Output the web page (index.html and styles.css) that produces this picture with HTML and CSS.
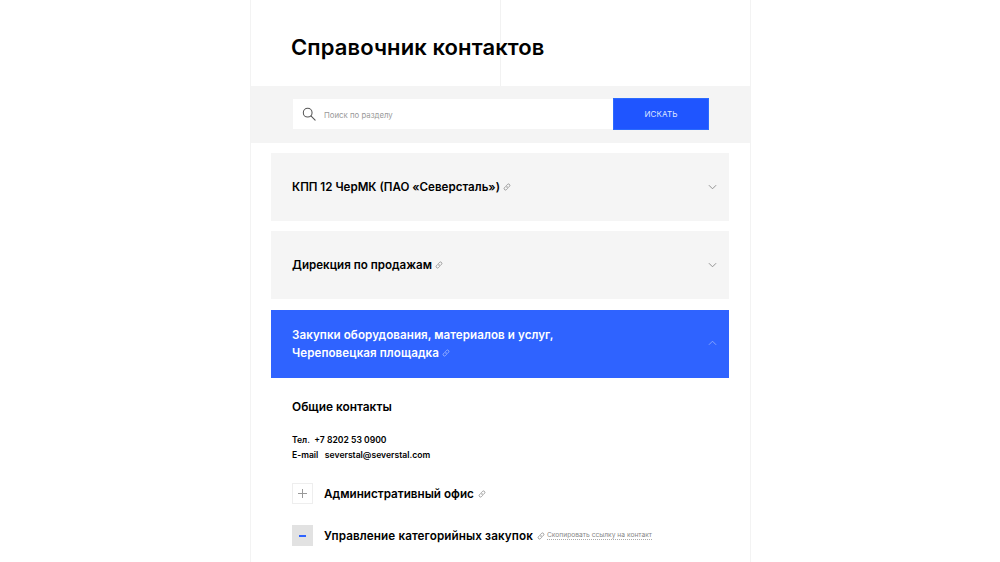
FILE: index.html
```html
<!DOCTYPE html>
<html lang="ru">
<head>
<meta charset="UTF-8" />
<meta name="viewport" content="width=device-width, initial-scale=1" />
<title>Справочник контактов</title>
<link rel="stylesheet" href="styles.css">
</head>
<body>

<main class="page">
  <!-- Заголовок -->
  <header class="page-head">
    <h1>Справочник контактов</h1>
  </header>

  <!-- Поиск -->
  <form class="search">
    <div class="search-box">
      <svg class="search-icon" viewBox="0 0 16 16" fill="none" stroke="#555" stroke-width="1.2">
        <circle cx="6.5" cy="6.5" r="5" />
        <path d="M10.2 10.2 L15 15" stroke-linecap="round" />
      </svg>
      <span class="search-hint">Поиск по разделу</span>
      <button type="button" class="search-btn">ИСКАТЬ</button>
    </div>
  </form>

  <!-- Разделы -->
  <section class="sections">
    <div class="section-row">
      <h3>КПП 12 ЧерМК (ПАО «Северсталь») <svg class="link-icon" viewBox="0 0 10 10"><use href="#link" /></svg></h3>
      <svg class="chevron" viewBox="0 0 10 6"><path d="M1 1 L5 5 L9 1" /></svg>
    </div>
    <div class="section-row">
      <h3>Дирекция по продажам <svg class="link-icon" viewBox="0 0 10 10"><use href="#link" /></svg></h3>
      <svg class="chevron" viewBox="0 0 10 6"><path d="M1 1 L5 5 L9 1" /></svg>
    </div>
    <div class="section-row open">
      <h3>Закупки оборудования, материалов и услуг,<br>Череповецкая площадка <svg class="link-icon" viewBox="0 0 10 10"><use href="#link" /></svg></h3>
      <svg class="chevron" viewBox="0 0 10 6"><path d="M1 5 L5 1 L9 5" /></svg>
    </div>

    <div class="section-body">
      <h4>Общие контакты</h4>
      <p class="contact-line">Тел.&nbsp; +7 8202 53 0900</p>
      <p class="contact-line">E-mail&nbsp;&nbsp; severstal@severstal.com</p>

      <div class="dept">
        <span class="toggle"><i class="bar-h"></i><i class="bar-v"></i></span>
        <h5>Административный офис</h5>
        <svg class="link-icon" viewBox="0 0 10 10"><use href="#link" /></svg>
      </div>
      <div class="dept">
        <span class="toggle active"><i class="bar-h"></i></span>
        <h5>Управление категорийных закупок</h5>
        <svg class="link-icon" viewBox="0 0 10 10"><use href="#link" /></svg>
        <a class="copy-link" href="#">Скопировать ссылку на контакт</a>
      </div>
    </div>
  </section>
</main>

<!-- Иконка ссылки -->
<svg class="sprite" width="0" height="0">
  <symbol id="link" viewBox="0 0 10 10">
    <g fill="none" stroke="currentColor" stroke-width="1">
      <path d="M4.2 3.2 L5.6 1.8 a1.6 1.6 0 0 1 2.5 2.4 L6.7 5.6 a1.6 1.6 0 0 1 -2.3 0" />
      <path d="M5.8 6.8 L4.4 8.2 a1.6 1.6 0 0 1 -2.5 -2.4 L3.3 4.4 a1.6 1.6 0 0 1 2.3 0" />
    </g>
  </symbol>
</svg>

</body>
</html>
```
FILE: styles.css
```css
/* Базовое */
* {
  margin: 0; padding: 0; box-sizing: border-box;
}
html, body {
  height: 100%;
  overflow: hidden;
  background: #fff;
  color: #000;
  font-family: Inter, "Noto Sans", sans-serif;
}
.sprite {
  position: absolute;
}

/* Колонка */
.page {
  width: 501px;
  height: 562px;
  margin-left: 250px;
  border-left: 1px solid #f3f3f3;
  border-right: 1px solid #f3f3f3;
}

/* Заголовок */
.page-head {
  position: relative;
  height: 86px;
  padding: 34px 0 0 40px;
}
.page-head::after {
  content: "";
  position: absolute;
  top: 0; bottom: 0; left: 249px;
  width: 1px;
  background: #f2f2f2;
}
.page-head h1 {
  position: relative;
  z-index: 1;
  font-size: 22px;
  line-height: 27px;
  font-weight: 600;
  letter-spacing: 0.1px;
}

/* Поиск */
.search {
  height: 57px;
  background: #f4f4f4;
  padding: 12px 41px 0 42px;
}
.search-box {
  display: flex;
  align-items: center;
  height: 32px;
  background: linear-gradient(#f4f4f4 1px, #fff 1px, #fff 31px, #f4f4f4 31px);
}
.search-icon {
  width: 14px;
  height: 14px;
  margin-left: 9px;
}
.search-hint {
  flex: 1;
  margin-left: 8px;
  padding-top: 1px;
  font-size: 7.8px;
  color: #999;
}
.search-btn {
  width: 96px;
  height: 32px;
  background: #1f55ff;
  border: 1px solid #2b6bff;
  color: #dfe7ff;
  font-family: inherit;
  font-size: 8px;
  letter-spacing: 0.1px;
}

/* Разделы */
.sections {
  padding: 10px 21px 0 20px;
}
.section-row {
  display: flex;
  align-items: center;
  justify-content: space-between;
  height: 68px;
  margin-bottom: 10px;
  padding: 0 12px 0 21px;
  background: #f5f5f5;
}
.section-row h3 {
  font-size: 11.6px;
  line-height: 18px;
  font-weight: 600;
}
.section-row.open {
  margin-top: 11px;
  margin-bottom: 0;
  background: #2f63ff;
  color: #fff;
}
.section-row.open h3 {
  padding-bottom: 1px;
  letter-spacing: 0.07px;
}
.link-icon {
  display: inline-block;
  width: 8px;
  height: 8px;
  margin-left: 0;
  color: #888;
  vertical-align: 0;
}
.open .link-icon {
  color: #a9bfff;
}
.chevron {
  width: 9px;
  height: 6px;
  fill: none;
  stroke: #888;
  stroke-width: 1;
}
.open .chevron {
  margin-bottom: 2px;
  stroke: #8fabff;
}

/* Раскрытый раздел */
.section-body {
  padding: 21px 0 0 21px;
}
.section-body h4 {
  font-size: 11.9px;
  line-height: 15px;
  font-weight: 600;
  margin-bottom: 19px;
}
.contact-line {
  font-size: 8.6px;
  line-height: 14.5px;
  font-weight: 600;
}
.dept {
  display: flex;
  align-items: center;
  gap: 11px;
  height: 21px;
  margin-top: 21px;
}
.dept .link-icon {
  margin-left: -7px;
}
.toggle {
  position: relative;
  flex: none;
  width: 21px;
  height: 21px;
  border: 1px solid #eee;
  background: #fff;
}
.toggle.active {
  background: #e2e2e2;
  border-color: #e2e2e2;
}
.bar-h, .bar-v {
  position: absolute;
  background: #999;
}
.bar-h {
  top: 9px; left: 5px;
  width: 9px;
  height: 1px;
}
.bar-v {
  top: 5px; left: 9px;
  width: 1px;
  height: 9px;
}
.active .bar-h {
  background: #2f63ff;
  height: 2px;
  left: 6px;
  width: 7px;
}
.dept h5 {
  font-size: 11.7px;
  font-weight: 600;
}
.dept + .dept h5 {
  letter-spacing: 0.1px;
}
.copy-link {
  margin-left: -9px;
  font-size: 6.7px;
  color: #888;
  text-decoration: none;
  border-bottom: 1px dotted #aaa;
}
```
